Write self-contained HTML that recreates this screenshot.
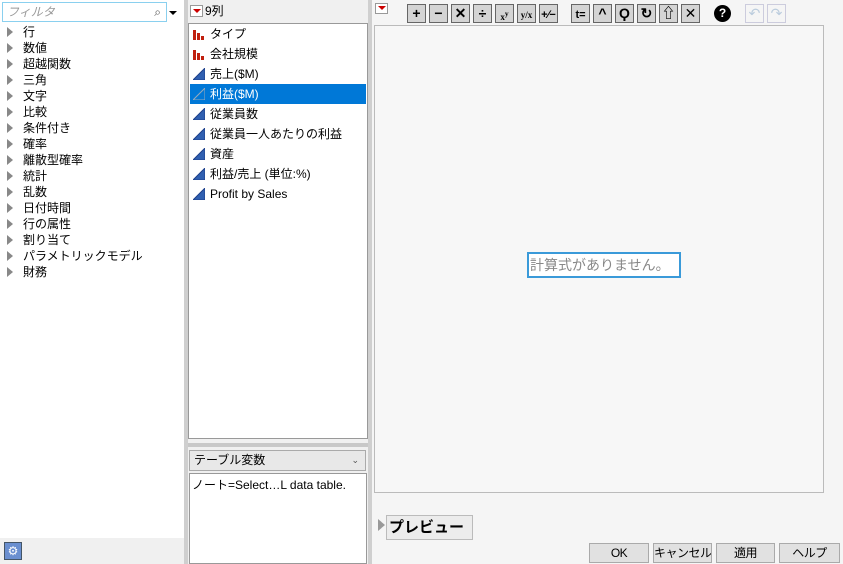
<!DOCTYPE html>
<html style="width:843px;height:564px;overflow:hidden"><head><meta charset="utf-8"><style>
*{box-sizing:border-box;margin:0;padding:0}
body{width:843px;height:564px;overflow:hidden;background:#f0f0f0;font-family:"Liberation Sans","Noto Sans CJK JP",sans-serif;font-size:12px;color:#000;position:relative}
.abs{position:absolute}
.tri{width:0;height:0;border-top:5px solid transparent;border-bottom:5px solid transparent;border-left:6px solid #888;position:absolute;left:7px}
.li{position:absolute;left:23px;font-size:12px;line-height:16px}
.ci{position:absolute;left:196px;font-size:12px;line-height:20px;height:20px;white-space:nowrap}
.tb{position:absolute;top:4px;width:19px;height:19px;border:1px solid #666;background:#d4d4d4;font-weight:bold;font-size:14px;text-align:center;line-height:17px}
.btn{position:absolute;top:543px;height:20px;border:1px solid #aaa;background:#e1e1e1;text-align:center;line-height:18px;font-size:12px;white-space:nowrap;overflow:hidden;letter-spacing:-0.5px}
</style></head><body>
<div class="abs" style="left:0;top:0;width:184px;height:538px;background:#fff"></div>
<div class="abs" style="left:0;top:538px;width:184px;height:26px;background:#f0f0f0"></div>
<div class="abs" style="left:2px;top:2px;width:165px;height:20px;border:1px solid #8ad0ef;background:#fff;color:#999;font-style:italic;padding-left:4px;line-height:18px">フィルタ<span style="position:absolute;right:5px;color:#555;font-style:normal">⌕</span></div>
<div class="abs" style="left:169px;top:11px;border-left:4px solid transparent;border-right:4px solid transparent;border-top:4px solid #000"></div>
<div class="abs" style="left:4px;top:542px;width:18px;height:18px;background:#6a8fd0;border:1px solid #456;color:#fff;text-align:center;line-height:16px">⚙</div>
<div class="abs" style="left:184px;top:0;width:4px;height:564px;background:#cfcfcf"></div>
<div class="abs" style="left:368px;top:0;width:4px;height:564px;background:#cfcfcf"></div>
<div id="left"></div>
<div class="abs" style="left:188px;top:0;width:180px;height:564px;background:#f0f0f0"></div>
<div class="abs" style="left:190px;top:5px;width:13px;height:12px;border:1px solid #999;background:#fff"><div style="position:absolute;left:2px;top:3px;border-left:4px solid transparent;border-right:4px solid transparent;border-top:4px solid #c00"></div></div>
<div class="abs" style="left:205px;top:3px;line-height:16px">9列</div>
<div class="abs" style="left:188px;top:23px;width:180px;height:416px;border:1px solid #999;background:#fff"></div>
<div class="abs" style="left:190px;top:84px;width:176px;height:20px;background:#0078d7"></div>
<div id="cols"></div>
<div class="abs" style="left:188px;top:443px;width:180px;height:4px;background:#c8c8c8"></div>
<div class="abs" style="left:189px;top:450px;width:177px;height:21px;border:1px solid #aaa;background:#e8e8e8;padding-left:4px;line-height:19px">テーブル変数<span style="position:absolute;right:6px;font-size:9px;color:#555">⌄</span></div>
<div class="abs" style="left:189px;top:473px;width:178px;height:91px;border:1px solid #999;background:#fff;padding:2px 2px;line-height:18px">ノート=Select…L data table.</div>
<div class="abs" style="left:372px;top:0;width:471px;height:564px;background:#f5f5f5"></div>
<div class="abs" style="left:375px;top:3px;width:13px;height:11px;border:1px solid #999;background:#fff"><div style="position:absolute;left:2px;top:2px;border-left:4px solid transparent;border-right:4px solid transparent;border-top:4px solid #c00"></div></div>
<div id="tb"></div>
<div class="abs" style="left:374px;top:25px;width:450px;height:468px;border:1px solid #bbb;background:#f7f7f7"></div>
<div class="abs" style="left:527px;top:252px;width:154px;height:26px;border:2px solid #3a9ad9;background:#fff;color:#888;font-size:14px;line-height:22px;padding-left:1px;white-space:nowrap">計算式がありません。</div>
<div class="abs" style="left:378px;top:519px;border-top:6px solid transparent;border-bottom:6px solid transparent;border-left:7px solid #999"></div>
<div class="abs" style="left:386px;top:515px;width:87px;height:25px;border:1px solid #bbb;background:#ececec;font-weight:bold;font-size:15px;line-height:23px;padding-left:2px;white-space:nowrap">プレビュー</div>
<div class="btn" style="left:589px;width:60px">OK</div>
<div class="btn" style="left:653px;width:59px">キャンセル</div>
<div class="btn" style="left:716px;width:59px">適用</div>
<div class="btn" style="left:779px;width:61px">ヘルプ</div>
<script>
var L=["行","数値","超越関数","三角","文字","比較","条件付き","確率","離散型確率","統計","乱数","日付時間","行の属性","割り当て","パラメトリックモデル","財務"],h="";
L.forEach(function(t,i){var y=24+i*16;h+='<div class="tri" style="top:'+(y+3)+'px"></div><div class="li" style="top:'+y+'px">'+t+'</div>';});
document.getElementById("left").innerHTML=h;
var C=[["タイプ",1],["会社規模",1],["売上($M)",0],["利益($M)",0],["従業員数",0],["従業員一人あたりの利益",0],["資産",0],["利益/売上 (単位:%)",0],["Profit by Sales",0]];h="";
C.forEach(function(c,i){var y=24+i*20,sel=i==3;
var ic=c[1]?'<svg width="12" height="12" style="position:absolute;left:-3px;top:4px"><rect x="0" y="2" width="3" height="10" fill="#c0200f"/><rect x="4" y="5" width="3" height="7" fill="#c0200f"/><rect x="8" y="8" width="3" height="4" fill="#c0200f"/></svg>':'<svg width="12" height="12" style="position:absolute;left:-3px;top:4px"><polygon points="0,12 12,0 12,12" fill="'+(sel?'none':'#2f5fb0')+'" stroke="'+(sel?'#9ab':'#1c3f8a')+'"/></svg>';
h+='<div class="ci" style="top:'+y+'px;color:'+(sel?'#fff':'#000')+'">'+ic+'<span style="margin-left:14px">'+c[0]+'</span></div>';});
document.getElementById("cols").innerHTML=h;
var T=[[407,"+"],[429,"−"],[451,"✕"],[473,"÷"],[495,"<span style=\"font-size:9px;font-family:serif\">x<sup>y</sup></span>"],[517,"<span style=\"font-size:9px;font-family:serif\">y/x</span>"],[539,"<span style=\"font-size:11px\">+∕−</span>"],[571,"<span style=\"font-size:11px\">t=</span>"],[593,"^"],[615,"Ϙ"],[637,"↻"],[659,"⇧"],[681,"<span style=\"font-weight:normal\">✕</span>"]];h="";
T.forEach(function(t){h+='<div class="tb" style="left:'+t[0]+'px">'+t[1]+'</div>';});
h+='<div class="abs" style="left:714px;top:5px;width:17px;height:17px;border-radius:50%;background:#000;color:#fff;text-align:center;line-height:17px;font-weight:bold">?</div>';
h+='<div class="tb" style="left:745px;background:#f5f5f5;border-color:#ccd;color:#bcd;font-weight:normal">↶</div><div class="tb" style="left:767px;background:#f5f5f5;border-color:#ccd;color:#bcd;font-weight:normal">↷</div>';
document.getElementById("tb").innerHTML=h;
</script>
</body></html>
